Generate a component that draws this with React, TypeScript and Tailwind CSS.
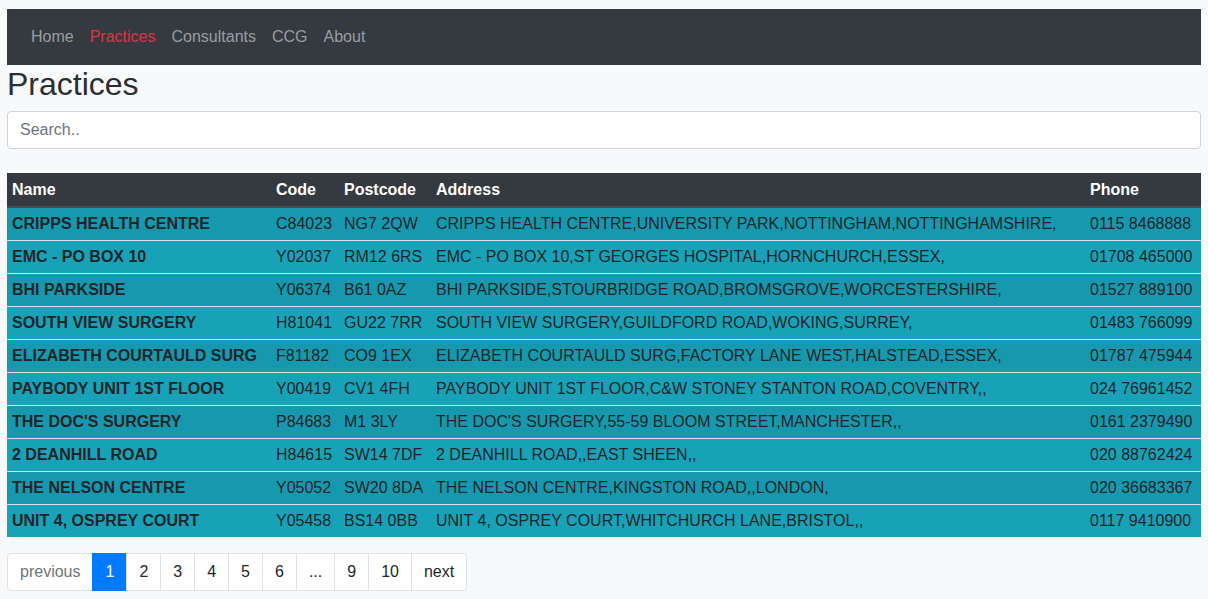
const rows = [
  ["CRIPPS HEALTH CENTRE", "C84023", "NG7 2QW", "CRIPPS HEALTH CENTRE,UNIVERSITY PARK,NOTTINGHAM,NOTTINGHAMSHIRE,", "0115 8468888"],
  ["EMC - PO BOX 10", "Y02037", "RM12 6RS", "EMC - PO BOX 10,ST GEORGES HOSPITAL,HORNCHURCH,ESSEX,", "01708 465000"],
  ["BHI PARKSIDE", "Y06374", "B61 0AZ", "BHI PARKSIDE,STOURBRIDGE ROAD,BROMSGROVE,WORCESTERSHIRE,", "01527 889100"],
  ["SOUTH VIEW SURGERY", "H81041", "GU22 7RR", "SOUTH VIEW SURGERY,GUILDFORD ROAD,WOKING,SURREY,", "01483 766099"],
  ["ELIZABETH COURTAULD SURG", "F81182", "CO9 1EX", "ELIZABETH COURTAULD SURG,FACTORY LANE WEST,HALSTEAD,ESSEX,", "01787 475944"],
  ["PAYBODY UNIT 1ST FLOOR", "Y00419", "CV1 4FH", "PAYBODY UNIT 1ST FLOOR,C&W STONEY STANTON ROAD,COVENTRY,,", "024 76961452"],
  ["THE DOC'S SURGERY", "P84683", "M1 3LY", "THE DOC'S SURGERY,55-59 BLOOM STREET,MANCHESTER,,", "0161 2379490"],
  ["2 DEANHILL ROAD", "H84615", "SW14 7DF", "2 DEANHILL ROAD,,EAST SHEEN,,", "020 88762424"],
  ["THE NELSON CENTRE", "Y05052", "SW20 8DA", "THE NELSON CENTRE,KINGSTON ROAD,,LONDON,", "020 36683367"],
  ["UNIT 4, OSPREY COURT", "Y05458", "BS14 0BB", "UNIT 4, OSPREY COURT,WHITCHURCH LANE,BRISTOL,,", "0117 9410900"],
];

const pages = ["1", "2", "3", "4", "5", "6", "...", "9", "10"];

export default function App() {
  return (
    <div className="min-h-[599px] bg-[#f8f9fa] px-[7px] pt-[9px] text-[#212529] font-['Liberation_Sans',Arial,sans-serif] text-[16px] leading-6">
      {/* navbar */}
      <nav className="flex h-[56px] items-center bg-[#343a40] px-4">
        <a className="px-2 py-2 text-[#9a9da0]">Home</a>
        <a className="px-2 py-2 text-[#dc3545]">Practices</a>
        <a className="px-2 py-2 text-[#9a9da0]">Consultants</a>
        <a className="px-2 py-2 text-[#9a9da0]">CCG</a>
        <a className="px-2 py-2 text-[#9a9da0]">About</a>
      </nav>

      <h2 className="mb-2 text-[32px] font-medium leading-[38px] text-[#2a2f34]">Practices</h2>

      <input
        placeholder="Search.."
        className="mb-6 block h-[38px] w-full rounded border border-[#ced4da] bg-white px-3 text-[16px] placeholder:text-[#6c757d] outline-none"
      />

      {/* table */}
      <table className="w-full table-fixed border-collapse">
        <colgroup>
          <col className="w-[264px]" />
          <col className="w-[68px]" />
          <col className="w-[92px]" />
          <col className="w-[654px]" />
          <col className="w-[116px]" />
        </colgroup>
        <thead>
          <tr className="bg-[#343a40] text-white">
            <th className="border-b-2 border-[#454d55] px-[5px] pt-[5px] pb-1 text-left font-bold">Name</th>
            <th className="border-b-2 border-[#454d55] px-[5px] pt-[5px] pb-1 text-left font-bold">Code</th>
            <th className="border-b-2 border-[#454d55] px-[5px] pt-[5px] pb-1 text-left font-bold">Postcode</th>
            <th className="border-b-2 border-[#454d55] px-[5px] pt-[5px] pb-1 text-left font-bold">Address</th>
            <th className="border-b-2 border-[#454d55] px-[5px] pt-[5px] pb-1 text-left font-bold">Phone</th>
          </tr>
        </thead>
        <tbody>
          {rows.map((r, i) => (
            <tr key={i} className={i % 2 === 0 ? "bg-[#1699ae]" : "bg-[#17a2b8]"}>
              <td className="whitespace-nowrap border-t border-[#dee2e6] px-[5px] py-1 font-bold">{r[0]}</td>
              <td className="whitespace-nowrap border-t border-[#dee2e6] px-[5px] py-1">{r[1]}</td>
              <td className="whitespace-nowrap border-t border-[#dee2e6] px-[5px] py-1">{r[2]}</td>
              <td className="whitespace-nowrap border-t border-[#dee2e6] px-[5px] py-1">{r[3]}</td>
              <td className="whitespace-nowrap border-t border-[#dee2e6] px-[5px] py-1">{r[4]}</td>
            </tr>
          ))}
        </tbody>
      </table>

      {/* pagination */}
      <div className="mt-4 flex">
        <span className="h-[38px] rounded-l border border-[#dee2e6] bg-white px-3 leading-[36px] text-[#6c757d]">previous</span>
        {pages.map((p) => (
          <span
            key={p}
            className={
              p === "1"
                ? "-ml-px h-[38px] border border-[#007bff] bg-[#007bff] px-3 leading-[36px] text-white"
                : "-ml-px h-[38px] border border-[#dee2e6] bg-white px-3 leading-[36px] text-[#212529]"
            }
          >
            {p}
          </span>
        ))}
        <span className="-ml-px h-[38px] rounded-r border border-[#dee2e6] bg-white px-3 leading-[36px] text-[#212529]">next</span>
      </div>
    </div>
  );
}
